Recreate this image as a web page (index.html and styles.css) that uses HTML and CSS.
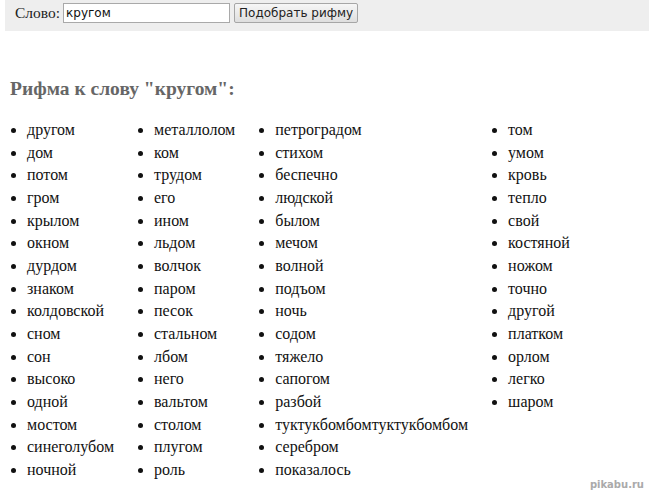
FILE: index.html
```html
<!DOCTYPE html>
<html lang="ru">
<head>
<meta charset="utf-8">
<link rel="stylesheet" href="styles.css">
</head>
<body>
<form class="bar">
  <label class="label">Слово:</label>
  <input class="field" type="text" value="кругом">
  <button class="btn" type="button">Подобрать рифму</button>
</form>
<h2 class="title">Рифма к слову "кругом":</h2>
<div class="cols">
  <ul class="col">
    <li>другом</li><li>дом</li><li>потом</li><li>гром</li><li>крылом</li><li>окном</li><li>дурдом</li><li>знаком</li><li>колдовской</li><li>сном</li><li>сон</li><li>высоко</li><li>одной</li><li>мостом</li><li>синеголубом</li><li>ночной</li>
  </ul>
  <ul class="col">
    <li>металлолом</li><li>ком</li><li>трудом</li><li>его</li><li>ином</li><li>льдом</li><li>волчок</li><li>паром</li><li>песок</li><li>стальном</li><li>лбом</li><li>него</li><li>вальтом</li><li>столом</li><li>плугом</li><li>роль</li>
  </ul>
  <ul class="col">
    <li>петроградом</li><li>стихом</li><li>беспечно</li><li>людской</li><li>былом</li><li>мечом</li><li>волной</li><li>подъом</li><li>ночь</li><li>содом</li><li>тяжело</li><li>сапогом</li><li>разбой</li><li>туктукбомбомтуктукбомбом</li><li>серебром</li><li>показалось</li>
  </ul>
  <ul class="col">
    <li>том</li><li>умом</li><li>кровь</li><li>тепло</li><li>свой</li><li>костяной</li><li>ножом</li><li>точно</li><li>другой</li><li>платком</li><li>орлом</li><li>легко</li><li>шаром</li>
  </ul>
</div>
<div class="mark">pikabu.ru</div>
</body>
</html>
```
FILE: styles.css
```css
html, body {
  margin: 0;
  padding: 0;
  background: #fff;
}
body {
  width: 650px;
  height: 494px;
  overflow: hidden;
  font-family: "Liberation Serif", "Times New Roman", serif;
  color: #111;
  position: relative;
}
.bar {
  margin: 0 1px 0 5px;
  height: 31px;
  background: #eeeeee;
  display: flex;
  align-items: flex-start;
  padding: 3px 0 0 10px;
  box-sizing: border-box;
  gap: 4px;
}
.label {
  font-size: 15.5px;
  line-height: 18px;
  margin-top: 1px;
  color: #222;
}
.field {
  width: 167px;
  height: 20px;
  box-sizing: border-box;
  border: 1px solid #a9a9a9;
  background: #fff;
  padding: 0 2px;
  font-family: "DejaVu Sans", Verdana, sans-serif;
  font-size: 12px;
  color: #111;
  margin: 0 0 0 -1px;
}
.btn {
  width: 124px;
  height: 20px;
  box-sizing: border-box;
  border: 1px solid #a6a6a6;
  border-radius: 2px;
  background: linear-gradient(#f6f6f6, #dedede);
  font-family: "DejaVu Sans", Verdana, sans-serif;
  font-size: 12px;
  color: #222;
  padding: 0;
  margin: 0;
}
.title {
  margin: 46px 0 0 10px;
  font-size: 19.5px;
  line-height: 24px;
  font-weight: bold;
  color: #666;
}
.cols {
  display: flex;
  margin-top: 18px;
}
.col {
  list-style: disc;
  margin: 0 13px 0 0;
  padding-left: 27px;
  font-size: 16px;
  line-height: 22.65px;
}
.mark {
  position: absolute;
  right: 6px;
  bottom: 4px;
  font-family: "DejaVu Sans", sans-serif;
  font-size: 10px;
  font-weight: bold;
  color: #aaa;
}
```
